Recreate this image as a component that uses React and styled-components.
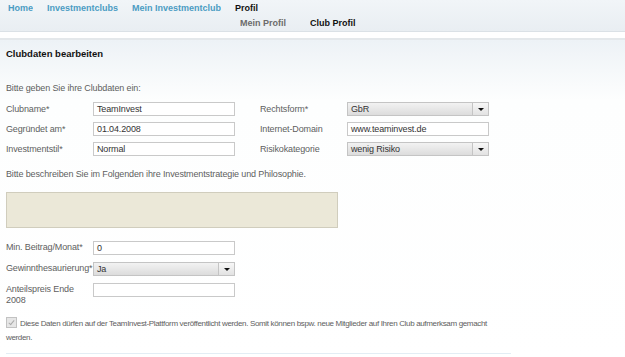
import React from "react";
import styled, { createGlobalStyle } from "styled-components";

const GlobalStyle = createGlobalStyle`
  body {
    margin: 0;
    background: #fff;
    font-family: "Liberation Sans", Arial, sans-serif;
    font-size: 9px;
    letter-spacing: -0.13px;
    color: #5e5e5e;
  }
`;

const Header = styled.div`
  height: 31px;
  background: linear-gradient(#f1f5f8, #e9eef2);
`;

const NavRow = styled.div`
  display: flex;
  height: 15px;
  align-items: center;
  padding-left: ${(p) => p.indent}px;
  gap: ${(p) => p.gap}px;
`;

const NavLink = styled.span`
  font-weight: bold;
  font-size: 9px;
  letter-spacing: 0;
  white-space: nowrap;
  overflow: hidden;
  color: ${(p) => (p.active ? "#111" : p.sub ? "#6b6b6b" : "#4b9cc3")};
  max-width: ${(p) => (p.clip ? `${p.clip}px` : "none")};
`;

const Divider = styled.div`
  height: 6px;
  background: #fff;
  border-top: 1px solid #dbe1e6;
  border-bottom: 2px solid #e4e8eb;
`;

const Section = styled.div`
  background: linear-gradient(#edf2f6, #fdfefe 60px, #fff);
  padding: 8px 6px 0;
`;

const Title = styled.h2`
  margin: 0;
  font-size: 9.5px;
  font-weight: bold;
  letter-spacing: 0;
  color: #111;
  line-height: 12px;
`;

const Text = styled.p`
  margin: ${(p) => p.m || "0"};
  line-height: 12px;
`;

const FormGrid = styled.div`
  display: grid;
  grid-template-columns: ${(p) => p.cols};
  row-gap: ${(p) => p.gap}px;
  align-items: ${(p) => p.align || "center"};
  margin-top: ${(p) => p.top || 0}px;
`;

const Label = styled.div`
  line-height: 11px;
  padding-top: ${(p) => p.pt || 0}px;
  white-space: ${(p) => (p.wrap ? "normal" : "nowrap")};
`;

const Input = styled.div`
  height: 12px;
  border: 1px solid #c9c9c9;
  background: #fff;
  color: #333;
  padding-left: 3px;
  line-height: 12px;
`;

const SelectBox = styled.div`
  display: flex;
  height: 12px;
  border: 1px solid #c4c4c4;
  background: linear-gradient(#f2f2f2, #dcdcdc);
  color: #333;
  line-height: 12px;
`;

const SelectValue = styled.span`
  flex: 1;
  padding-left: 3px;
`;

const SelectButton = styled.span`
  width: 15px;
  border-left: 1px solid #c4c4c4;
  background: linear-gradient(#f7f7f7, #e2e2e2);
  display: flex;
  align-items: center;
  justify-content: center;
  &::after {
    content: "";
    border-left: 3px solid transparent;
    border-right: 3px solid transparent;
    border-top: 3px solid #111;
  }
`;

const TextArea = styled.div`
  width: 330px;
  height: 34px;
  border: 1px solid #d0cdbd;
  background: #ebe8d8;
  margin-top: 12px;
`;

const CheckRow = styled.div`
  margin-top: 11px;
  line-height: 14px;
  width: 492px;
  font-size: 8px;
  letter-spacing: -0.34px;
`;

const CheckBox = styled.span`
  display: inline-block;
  width: 9px;
  height: 9px;
  border: 1px solid #c2c2c2;
  background: #e6e6e6;
  vertical-align: -2px;
  margin-right: 3px;
  position: relative;
  &::after {
    content: "";
    position: absolute;
    left: 3px;
    top: 1px;
    width: 2px;
    height: 5px;
    border-right: 1px solid #aaa;
    border-bottom: 1px solid #aaa;
    transform: rotate(40deg);
  }
`;

const BottomLine = styled.div`
  width: 505px;
  margin-top: 8px;
  border-top: 1px solid #e3edf4;
  height: 6px;
`;

const Select = ({ value }) => (
  <SelectBox>
    <SelectValue>{value}</SelectValue>
    <SelectButton />
  </SelectBox>
);

export default function App() {
  return (
    <>
      <GlobalStyle />
      <Header>
        <NavRow indent={8} gap={14}>
          <NavLink>Home</NavLink>
          <NavLink>Investmentclubs</NavLink>
          <NavLink clip={89}>Mein Investmentclub</NavLink>
          <NavLink active>Profil</NavLink>
        </NavRow>
        <NavRow indent={240} gap={24}>
          <NavLink sub>Mein Profil</NavLink>
          <NavLink active>Club Profil</NavLink>
        </NavRow>
      </Header>
      <Divider />
      <Section>
        <Title>Clubdaten bearbeiten</Title>
        <Text m="22px 0 8px">Bitte geben Sie ihre Clubdaten ein:</Text>
        <FormGrid cols="87px 142px 25px 87px 142px" gap={6}>
          <Label>Clubname*</Label>
          <Input>TeamInvest</Input>
          <span />
          <Label>Rechtsform*</Label>
          <Select value="GbR" />

          <Label>Gegründet am*</Label>
          <Input>01.04.2008</Input>
          <span />
          <Label>Internet-Domain</Label>
          <Input>www.teaminvest.de</Input>

          <Label>Investmentstil*</Label>
          <Input>Normal</Input>
          <span />
          <Label>Risikokategorie</Label>
          <Select value="wenig Risiko" />
        </FormGrid>
        <Text m="12px 0 0">
          Bitte beschreiben Sie im Folgenden ihre Investmentstrategie und Philosophie.
        </Text>
        <TextArea />
        <FormGrid cols="87px 142px" gap={7} align="start" top={13}>
          <Label pt={1}>Min. Beitrag/Monat*</Label>
          <Input>0</Input>
          <Label pt={1}>Gewinnthesaurierung*</Label>
          <Select value="Ja" />
          <Label pt={1} wrap>Anteilspreis Ende 2008</Label>
          <Input />
        </FormGrid>
        <CheckRow>
          <CheckBox />
          Diese Daten dürfen auf der TeamInvest-Plattform veröffentlicht werden. Somit
          können bspw. neue Mitglieder auf Ihren Club aufmerksam gemacht werden.
        </CheckRow>
        <BottomLine />
      </Section>
    </>
  );
}
